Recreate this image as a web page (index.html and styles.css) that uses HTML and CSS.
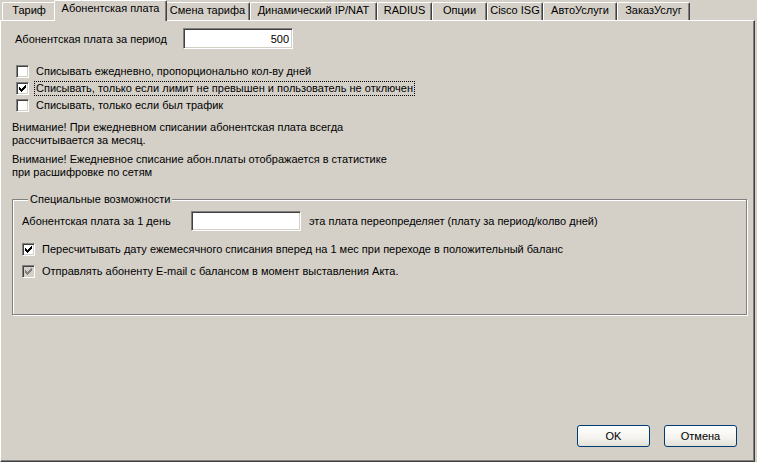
FILE: index.html
```html
<!DOCTYPE html>
<html lang="ru">
<head>
    <meta charset="UTF-8">
    <title>Абонентская плата</title>
    <link rel="stylesheet" href="styles.css">
</head>
<body>
    <div class="tabs">
        <div class="tab">Тариф</div>
        <div class="tab active">Абонентская плата</div>
        <div class="tab">Смена тарифа</div>
        <div class="tab">Динамический IP/NAT</div>
        <div class="tab">RADIUS</div>
        <div class="tab">Опции</div>
        <div class="tab">Cisco ISG</div>
        <div class="tab">АвтоУслуги</div>
        <div class="tab">ЗаказУслуг</div>
    </div>
    <div class="panel">
        <div class="period">
            <span class="period-label">Абонентская плата за период</span>
            <input type="text" class="field field-period" value="500">
        </div>
        <div class="checks">
            <div class="check">
                <span class="cb"></span>
                <span class="cb-text">Списывать ежедневно, пропорционально кол-ву дней</span>
            </div>
            <div class="check">
                <span class="cb"><svg width="7" height="7" viewBox="0 0 7 7" shape-rendering="crispEdges"><path d="M0 2h1v3H0zM1 3h1v3H1zM2 4h1v3H2zM3 3h1v3H3zM4 2h1v3H4zM5 1h1v3H5zM6 0h1v3H6z"/></svg></span>
                <span class="cb-text focus">Списывать, только если лимит не превышен и пользователь не отключен</span>
            </div>
            <div class="check">
                <span class="cb"></span>
                <span class="cb-text">Списывать, только если был трафик</span>
            </div>
        </div>
        <p class="note">Внимание! При ежедневном списании абонентская плата всегда<br>рассчитывается за месяц.</p>
        <p class="note note-second">Внимание! Ежедневное списание абон.платы отображается в статистике<br>при расшифровке по сетям</p>

        <fieldset class="group">
            <legend>Специальные возможности</legend>
            <div class="day">
                <span class="day-label">Абонентская плата за 1 день</span>
                <input type="text" class="field field-day" value="">
                <span class="day-hint">эта плата переопределяет (плату за период/колво дней)</span>
            </div>
            <div class="check check-wide check-first">
                <span class="cb"><svg width="7" height="7" viewBox="0 0 7 7" shape-rendering="crispEdges"><path d="M0 2h1v3H0zM1 3h1v3H1zM2 4h1v3H2zM3 3h1v3H3zM4 2h1v3H4zM5 1h1v3H5zM6 0h1v3H6z"/></svg></span>
                <span class="cb-text">Пересчитывать дату ежемесячного списания вперед на 1 мес при переходе в положительный баланс</span>
            </div>
            <div class="check check-wide">
                <span class="cb disabled"><svg width="7" height="7" viewBox="0 0 7 7" shape-rendering="crispEdges"><path d="M0 2h1v3H0zM1 3h1v3H1zM2 4h1v3H2zM3 3h1v3H3zM4 2h1v3H4zM5 1h1v3H5zM6 0h1v3H6z"/></svg></span>
                <span class="cb-text">Отправлять абоненту E-mail с балансом в момент выставления Акта.</span>
            </div>
        </fieldset>

        <div class="buttons">
            <button class="btn">OK</button>
            <button class="btn">Отмена</button>
        </div>
    </div>
</body>
</html>
```

FILE: styles.css
```css
*{
    padding: 0;
    margin: 0;
    box-sizing: border-box;
}
body{
    width: 757px;
    height: 462px;
    overflow: hidden;
    background: #d4d0c8;
    font-family: "Liberation Sans", Arial, sans-serif;
    font-size: 11px;
    color: #000;
}
/* вкладки */
.tabs{
    display: flex;
    height: 20px;
    padding-left: 2px;
}
.tab{
    margin-top: 2px;
    height: 18px;
    border-left: 1px solid #fff;
    border-top: 1px solid #fff;
    border-right: 1px solid #404040;
    border-radius: 2px 2px 0 0;
    box-shadow: inset -1px 0 #808080;
    text-align: center;
    line-height: 15px;
    white-space: nowrap;
}
.tab:nth-child(1){ width: 54px; }
.tab:nth-child(2){ width: 109px; }
.tab:nth-child(3){ width: 85px; }
.tab:nth-child(4){ width: 127px; }
.tab:nth-child(5){ width: 55px; }
.tab:nth-child(6){ width: 55px; }
.tab:nth-child(7){ width: 56px; }
.tab:nth-child(8){ width: 74px; }
.tab:nth-child(9){ width: 73px; }
.tab.active{
    position: relative;
    z-index: 1;
    width: 113px;
    margin: 0 -2px;
    height: 21px;
    background: #d4d0c8;
    line-height: 14px;
}
/* панель */
.panel{
    display: flex;
    flex-direction: column;
    width: 755px;
    height: 442px;
    border-left: 1px solid #fff;
    border-top: 1px solid #fff;
    border-right: 1px solid #404040;
    border-bottom: 1px solid #404040;
    box-shadow: inset -1px -1px #808080;
    padding: 0 0 14px 11px;
}
.period{
    display: flex;
    align-items: center;
    margin-top: 7px;
    height: 21px;
}
.period-label{
    width: 171px;
    padding-left: 3px;
}
.field{
    height: 21px;
    border: 1px solid;
    border-color: #808080 #fff #fff #808080;
    box-shadow: inset 1px 1px #404040, inset -1px -1px #d4d0c8;
    background: #fff;
    font: inherit;
    outline: none;
}
.field-period{
    width: 110px;
    text-align: right;
    padding-right: 3px;
}
.checks{
    margin-top: 14px;
}
.check{
    display: flex;
    align-items: center;
    height: 17px;
    padding-left: 4px;
}
.cb{
    width: 13px;
    height: 13px;
    flex: none;
    padding: 2px;
    border: 1px solid;
    border-color: #808080 #fff #fff #808080;
    box-shadow: inset 1px 1px #404040, inset -1px -1px #d4d0c8;
    background: #fff;
}
.cb svg{
    display: block;
}
.cb.disabled{
    background: #d4d0c8;
}
.cb.disabled svg{
    fill: #808080;
}
.cb-text{
    margin-left: 5px;
    padding: 0 1px;
    border: 1px solid transparent;
    line-height: 13px;
    white-space: nowrap;
}
.cb-text.focus{
    border: 1px dotted #000;
}
.note{
    margin-top: 7px;
    line-height: 13px;
}
.note-second{
    margin-top: 6px;
}
/* групповая рамка */
.group{
    width: 735px;
    margin-top: 14px;
    border: 1px solid #808080;
    box-shadow: inset 1px 1px #fff, 1px 1px #fff;
    padding: 0 0 32px 9px;
}
.group legend{
    margin-left: 6px;
    padding: 0 2px;
    line-height: 13px;
    background: #d4d0c8;
}
.day{
    display: flex;
    align-items: center;
    margin-top: 5px;
    height: 20px;
}
.day-label{
    width: 169px;
}
.field-day{
    width: 110px;
    height: 20px;
}
.day-hint{
    margin-left: 8px;
}
.check-wide{
    height: 22px;
    padding-left: 0;
}
.check-first{
    margin-top: 7px;
}
/* кнопки */
.buttons{
    display: flex;
    justify-content: flex-end;
    gap: 14px;
    margin-top: auto;
    padding-right: 17px;
}
.btn{
    width: 73px;
    height: 22px;
    border: 1px solid #003c74;
    border-radius: 3px;
    background: linear-gradient(#ffffff, #f4f3ee 60%, #e3e0d6);
    font: inherit;
    color: #000;
}
```
